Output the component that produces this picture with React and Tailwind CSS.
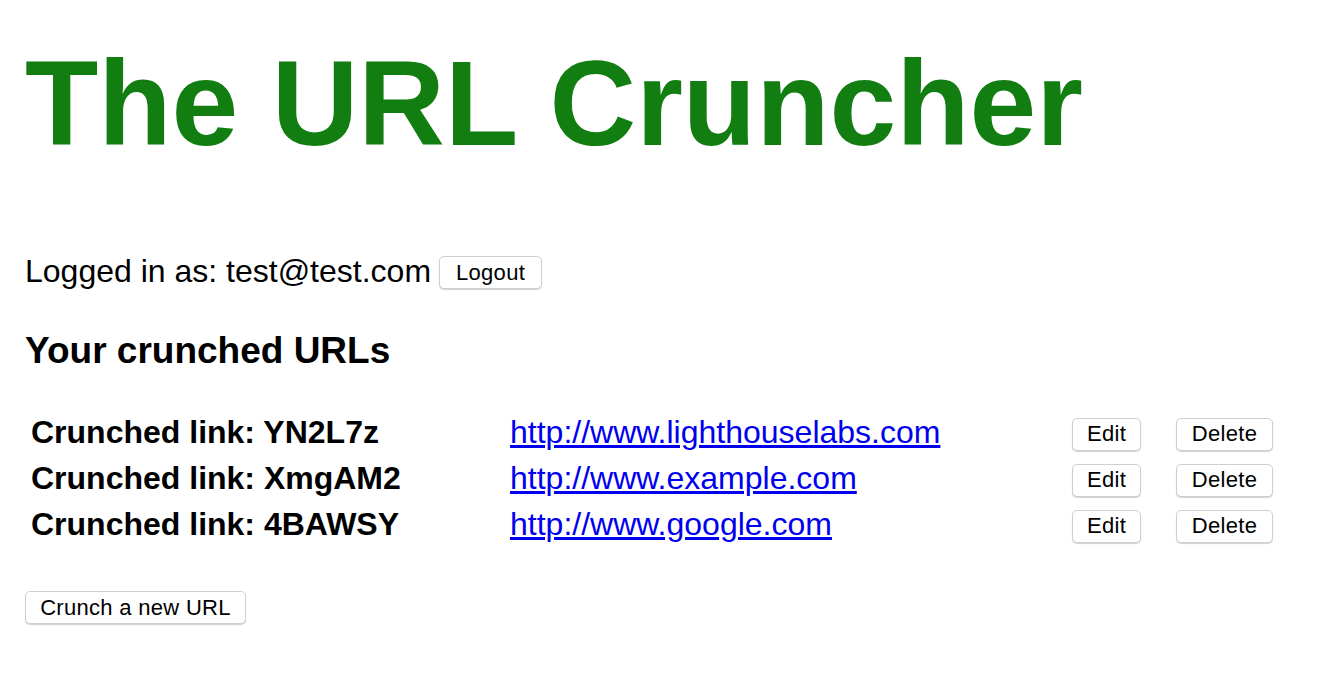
export default function App() {
  const rows = [
    { code: "YN2L7z", url: "http://www.lighthouselabs.com" },
    { code: "XmgAM2", url: "http://www.example.com" },
    { code: "4BAWSY", url: "http://www.google.com" },
  ];
  const btn =
    "h-[33px] bg-white border border-[#cfcfcf] rounded-[5px] shadow-[0_1px_1px_rgba(0,0,0,0.18)] text-[22px] tracking-[0.3px] text-black flex items-center justify-center leading-none";
  return (
    <div
      className="min-h-[688px] w-full bg-white text-black pl-[25px]"
      style={{ fontFamily: '"Liberation Sans", Arial, Helvetica, sans-serif' }}
    >
      <h1 className="pt-[34px] text-[120px] leading-[138px] font-bold text-[#127e12] whitespace-nowrap">
        The URL Cruncher
      </h1>
      <div className="mt-[81px] flex items-center h-[37px]">
        <span className="text-[32px] leading-[37px] whitespace-nowrap">Logged in as: test@test.com</span>
        <button className={`${btn} w-[103px] ml-[8px] mt-[2px]`}>Logout</button>
      </div>
      <h3 className="mt-[40px] text-[37px] leading-[42px] font-bold">Your crunched URLs</h3>
      <div className="mt-[39px] pl-[6px] grid grid-cols-[479px_562px_104px_auto]">
        {rows.map((r) => (
          <div key={r.code} className="contents">
            <div className="h-[46px] flex items-center pb-[3px] text-[32px] leading-[37px] font-bold whitespace-nowrap">
              Crunched link: {r.code}
            </div>
            <div className="h-[46px] flex items-center pb-[3px]">
              <a href="#" className="text-[32px] leading-[37px] text-[#0000ee] underline whitespace-nowrap">
                {r.url}
              </a>
            </div>
            <div className="h-[46px] flex items-center">
              <button className={`${btn} w-[69px]`}>Edit</button>
            </div>
            <div className="h-[46px] flex items-center">
              <button className={`${btn} w-[97px]`}>Delete</button>
            </div>
          </div>
        ))}
      </div>
      <div className="mt-[42px]">
        <button className={`${btn} w-[221px]`}>Crunch a new URL</button>
      </div>
    </div>
  );
}
